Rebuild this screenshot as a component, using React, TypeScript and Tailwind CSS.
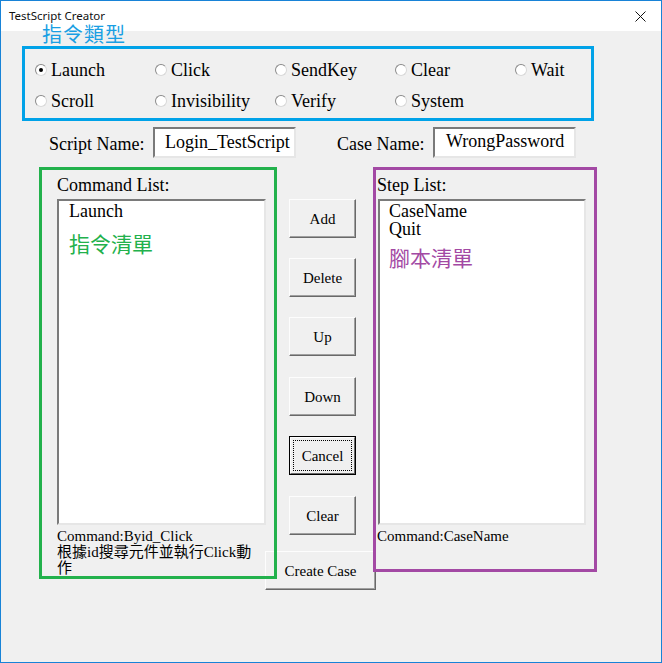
import React from "react";

const serif = "font-['Liberation_Serif','Noto_Sans_CJK_TC',serif]";

function Radio({ label, checked }: { label: string; checked?: boolean }) {
  return (
    <div className="flex items-center gap-[4px]">
      <span className="w-[12px] h-[12px] rounded-full bg-white border border-t-[#8a8a8a] border-l-[#8a8a8a] border-r-[#d8d8d8] border-b-[#d8d8d8] flex items-center justify-center">
        {checked ? <span className="w-[4px] h-[4px] rounded-full bg-black" /> : null}
      </span>
      <span className="text-[18px] leading-[22px]">{label}</span>
    </div>
  );
}

function Btn({ label, className = "" }: { label: string; className?: string }) {
  return (
    <div
      className={`h-[39px] bg-[#f0f0f0] border border-t-[#fdfdfd] border-l-[#fdfdfd] border-r-[#696969] border-b-[#696969] shadow-[inset_-1px_-1px_0_#a0a0a0] text-[15px] leading-[18px] flex items-center justify-center ${className}`}
    >
      {label}
    </div>
  );
}

function CancelBtn({ className = "" }: { className?: string }) {
  return (
    <div className={`h-[39px] border border-black ${className}`}>
      <div className="h-full w-full bg-[#f0f0f0] border border-t-[#fdfdfd] border-l-[#fdfdfd] border-r-[#696969] border-b-[#696969] p-[2px]">
        <div className="h-full w-full border border-dotted border-black flex items-center justify-center text-[15px] leading-[18px]">
          Cancel
        </div>
      </div>
    </div>
  );
}

const sunken =
  "bg-white border-2 border-t-[#7a7a7a] border-l-[#7a7a7a] border-r-[#e6e6e6] border-b-[#e6e6e6]";

export default function App() {
  return (
    <div
      className={`relative w-[662px] h-[663px] overflow-hidden border border-[#1883d7] bg-[#f0f0f0] text-black ${serif}`}
    >
      {/* title bar */}
      <div className="h-[30px] bg-white flex items-center justify-between pl-[8px]">
        <span className="font-['Noto_Sans',sans-serif] text-[11.5px] leading-[14px] text-[#101010]">
          TestScript Creator
        </span>
        <span className="w-[46px] h-[30px] flex items-center justify-center mr-[-2px]">
          <svg width="11" height="11" viewBox="0 0 11 11">
            <path d="M0.5 0.5 L10.5 10.5 M10.5 0.5 L0.5 10.5" stroke="#111" strokeWidth="1" />
          </svg>
        </span>
      </div>

      <span className="absolute left-[41px] top-[20px] z-20 font-['Noto_Sans_CJK_TC',sans-serif] text-[20px] leading-[26px] text-[#1a9fe3] tracking-[1px]">
        指令類型
      </span>

      {/* command type group */}
      <div className="ml-[21px] mt-[15px] w-[572px] h-[75px] border-[3px] border-[#00a2e8] pl-[10px] pt-[5px]">
        <div className="grid grid-cols-[120px_120px_120px_120px_120px] auto-rows-[31px]">
          <Radio label="Launch" checked />
          <Radio label="Click" />
          <Radio label="SendKey" />
          <Radio label="Clear" />
          <Radio label="Wait" />
          <Radio label="Scroll" />
          <Radio label="Invisibility" />
          <Radio label="Verify" />
          <Radio label="System" />
        </div>
      </div>

      {/* names */}
      <div className="flex items-center mt-[6px] ml-[48px] h-[31px]">
        <span className="w-[104px] text-[18px] leading-[22px] pt-[3px]">Script Name:</span>
        <div className={`w-[143px] h-[31px] ${sunken} pl-[10px] pt-[1px] text-[18px] leading-[24px]`}>
          Login_TestScript
        </div>
        <span className="ml-[41px] w-[96px] text-[18px] leading-[22px] pt-[3px]">Case Name:</span>
        <div className={`w-[143px] h-[31px] ${sunken} pl-[11px] pt-[0px] text-[18px] leading-[24px]`}>
          WrongPassword
        </div>
      </div>

      {/* lists */}
      <div className="flex items-start mt-[9px] ml-[38px]">
        <div className="relative z-10 w-[238px] h-[412px] border-[3px] border-[#22b14c] pl-[15px]">
          <div className="mt-[3px] text-[18px] leading-[24px]">Command List:</div>
          <div className={`mt-[2px] w-[209px] h-[326px] ${sunken} pl-[10px] pt-[1px]`}>
            <div className="text-[18px] leading-[18px]">Launch</div>
            <div className="mt-[9px] font-['Noto_Sans_CJK_TC',sans-serif] text-[21px] leading-[28px] text-[#22b14c]">
              指令清單
            </div>
          </div>
          <div className="mt-[3px] text-[15px] leading-[16px]">
            <div>Command:Byid_Click</div>
            <div>根據id搜尋元件並執行Click動</div>
            <div>作</div>
          </div>
        </div>

        <div className="w-[96px] flex flex-col pt-[32px]">
          <Btn label="Add" className="ml-[12px] w-[67px]" />
          <Btn label="Delete" className="ml-[12px] w-[67px] mt-[20px]" />
          <Btn label="Up" className="ml-[12px] w-[67px] mt-[20px]" />
          <Btn label="Down" className="ml-[12px] w-[67px] mt-[21px]" />
          <CancelBtn className="ml-[12px] w-[67px] mt-[20px]" />
          <Btn label="Clear" className="ml-[12px] w-[67px] mt-[21px]" />
          <Btn label="Create Case" className="ml-[-12px] w-[111px] mt-[16px]" />
        </div>

        <div className="relative z-10 w-[224px] h-[405px] border-[3px] border-[#a349a4] pl-[1px]">
          <div className="mt-[3px] text-[18px] leading-[24px]">Step List:</div>
          <div className={`mt-[2px] ml-[1px] w-[208px] h-[326px] ${sunken} pl-[9px] pt-[1px]`}>
            <div className="text-[18px] leading-[18px]">CaseName</div>
            <div className="text-[18px] leading-[18px]">Quit</div>
            <div className="mt-[5px] font-['Noto_Sans_CJK_TC',sans-serif] text-[21px] leading-[28px] text-[#a349a4]">
              腳本清單
            </div>
          </div>
          <div className="mt-[3px] text-[15px] leading-[16px]">Command:CaseName</div>
        </div>
      </div>
    </div>
  );
}
